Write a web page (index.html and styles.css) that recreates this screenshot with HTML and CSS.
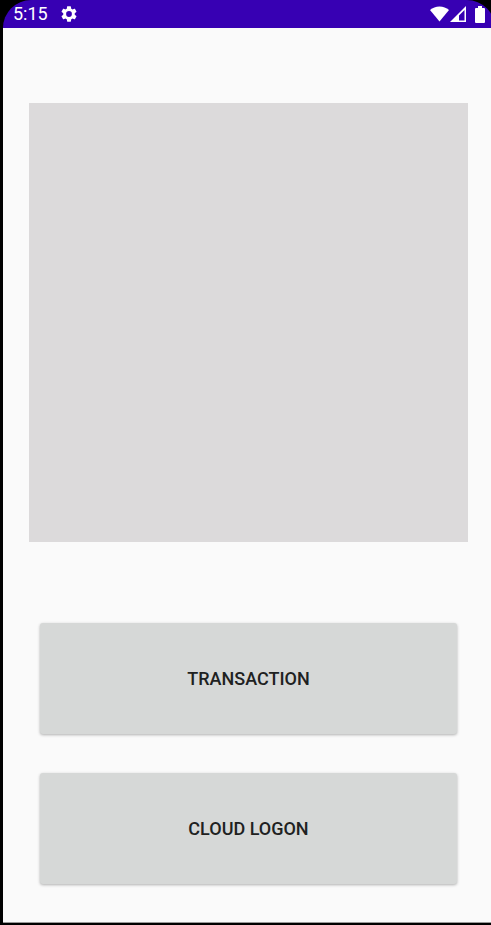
FILE: index.html
```html
<!DOCTYPE html>
<html lang="en">
<head>
<meta charset="utf-8">
<meta name="viewport" content="width=device-width, initial-scale=1">
<title>Home</title>
<link rel="stylesheet" href="styles.css">
</head>
<body>
<div class="screen">
  <header class="status">
    <time class="clock">5:15</time>
    <svg class="gear" viewBox="2 2 20 20" aria-hidden="true"><path d="M19.14 12.94c.04-.3.06-.61.06-.94 0-.32-.02-.64-.07-.94l2.03-1.58a.49.49 0 0 0 .12-.61l-1.92-3.32a.488.488 0 0 0-.59-.22l-2.39.96c-.5-.38-1.03-.7-1.62-.94l-.36-2.54a.484.484 0 0 0-.48-.41h-3.84c-.24 0-.43.17-.47.41l-.36 2.54c-.59.24-1.13.57-1.62.94l-2.39-.96c-.22-.08-.47 0-.59.22L2.74 8.87c-.12.21-.08.47.12.61l2.03 1.58c-.05.3-.09.63-.09.94s.02.64.07.94l-2.03 1.58a.49.49 0 0 0-.12.61l1.92 3.32c.12.22.37.29.59.22l2.39-.96c.5.38 1.03.7 1.62.94l.36 2.54c.05.24.24.41.48.41h3.84c.24 0 .44-.17.47-.41l.36-2.54c.59-.24 1.13-.56 1.62-.94l2.39.96c.22.08.47 0 .59-.22l1.92-3.32c.12-.22.07-.47-.12-.61l-2.01-1.58zM12 15.6a3.6 3.6 0 1 1 0-7.2 3.6 3.6 0 0 1 0 7.2z"/></svg>
    <div class="signals">
      <svg class="wifi" viewBox="0 0 19 16" aria-hidden="true"><path d="M0 4Q4 0.500 9.500 0.500T19 4L9.500 15.500Z"/></svg>
      <svg class="cell" viewBox="0 0 16 16" aria-hidden="true"><path fill-rule="evenodd" d="M16 0V16H0ZM14.500 4L9 9.500V14.500H14.500Z"/></svg>
      <svg class="battery" viewBox="0 0 10 17" aria-hidden="true"><path d="M3 0H7V2H9Q10 2 10 3V16Q10 17 9 17H1Q0 17 0 16V3Q0 2 1 2H3Z"/></svg>
    </div>
  </header>
  <main class="content">
    <div class="preview"></div>
    <div class="actions">
      <button class="action" type="button">TRANSACTION</button>
      <button class="action" type="button">CLOUD LOGON</button>
    </div>
  </main>
</div>
</body>
</html>
```
FILE: styles.css
```css
* {
  box-sizing: border-box;
}

body {
  margin: 0;
  padding: 0 0 2px 3px;
  min-height: 100vh;
  display: flex;
  overflow: hidden;
  background: #000;
  font-family: Roboto, sans-serif;
}

/* The screen runs slightly past the right edge of the window. */
.screen {
  flex: 1;
  min-width: 0;
  margin-right: -4px;
  display: flex;
  flex-direction: column;
  border-bottom: 1px solid #999;
}

.status {
  height: 28px;
  padding: 0 10px;
  display: flex;
  align-items: center;
  border-radius: 28px 28px 0 0;
  background: #3700b3;
  color: #fff;
}

.status svg {
  display: block;
  fill: #fff;
}

.clock {
  font-size: 18px;
  line-height: 28px;
}

.gear {
  width: 16px;
  height: 16px;
  margin-left: 13px;
}

.signals {
  display: flex;
  align-items: center;
  margin-left: auto;
}

.wifi {
  width: 19px;
  height: 16px;
}

.cell {
  width: 16px;
  height: 16px;
  margin-left: 1px;
}

.battery {
  width: 10px;
  height: 17px;
  margin-left: 9px;
}

.content {
  flex: 1;
  padding: 75px 27px 38px 26px;
  background: #fafafa;
}

.preview {
  aspect-ratio: 1;
  background: #dcdadb;
}

.actions {
  display: flex;
  flex-direction: column;
  gap: 39px;
  padding: 81px 11px 0;
}

.action {
  height: 111px;
  border: 0;
  border-radius: 3px;
  background: #d6d8d7;
  box-shadow: 0 1px 3px rgba(0, 0, 0, 0.3);
  color: #202121;
  font: 500 18px/24px Roboto, sans-serif;
}
```
